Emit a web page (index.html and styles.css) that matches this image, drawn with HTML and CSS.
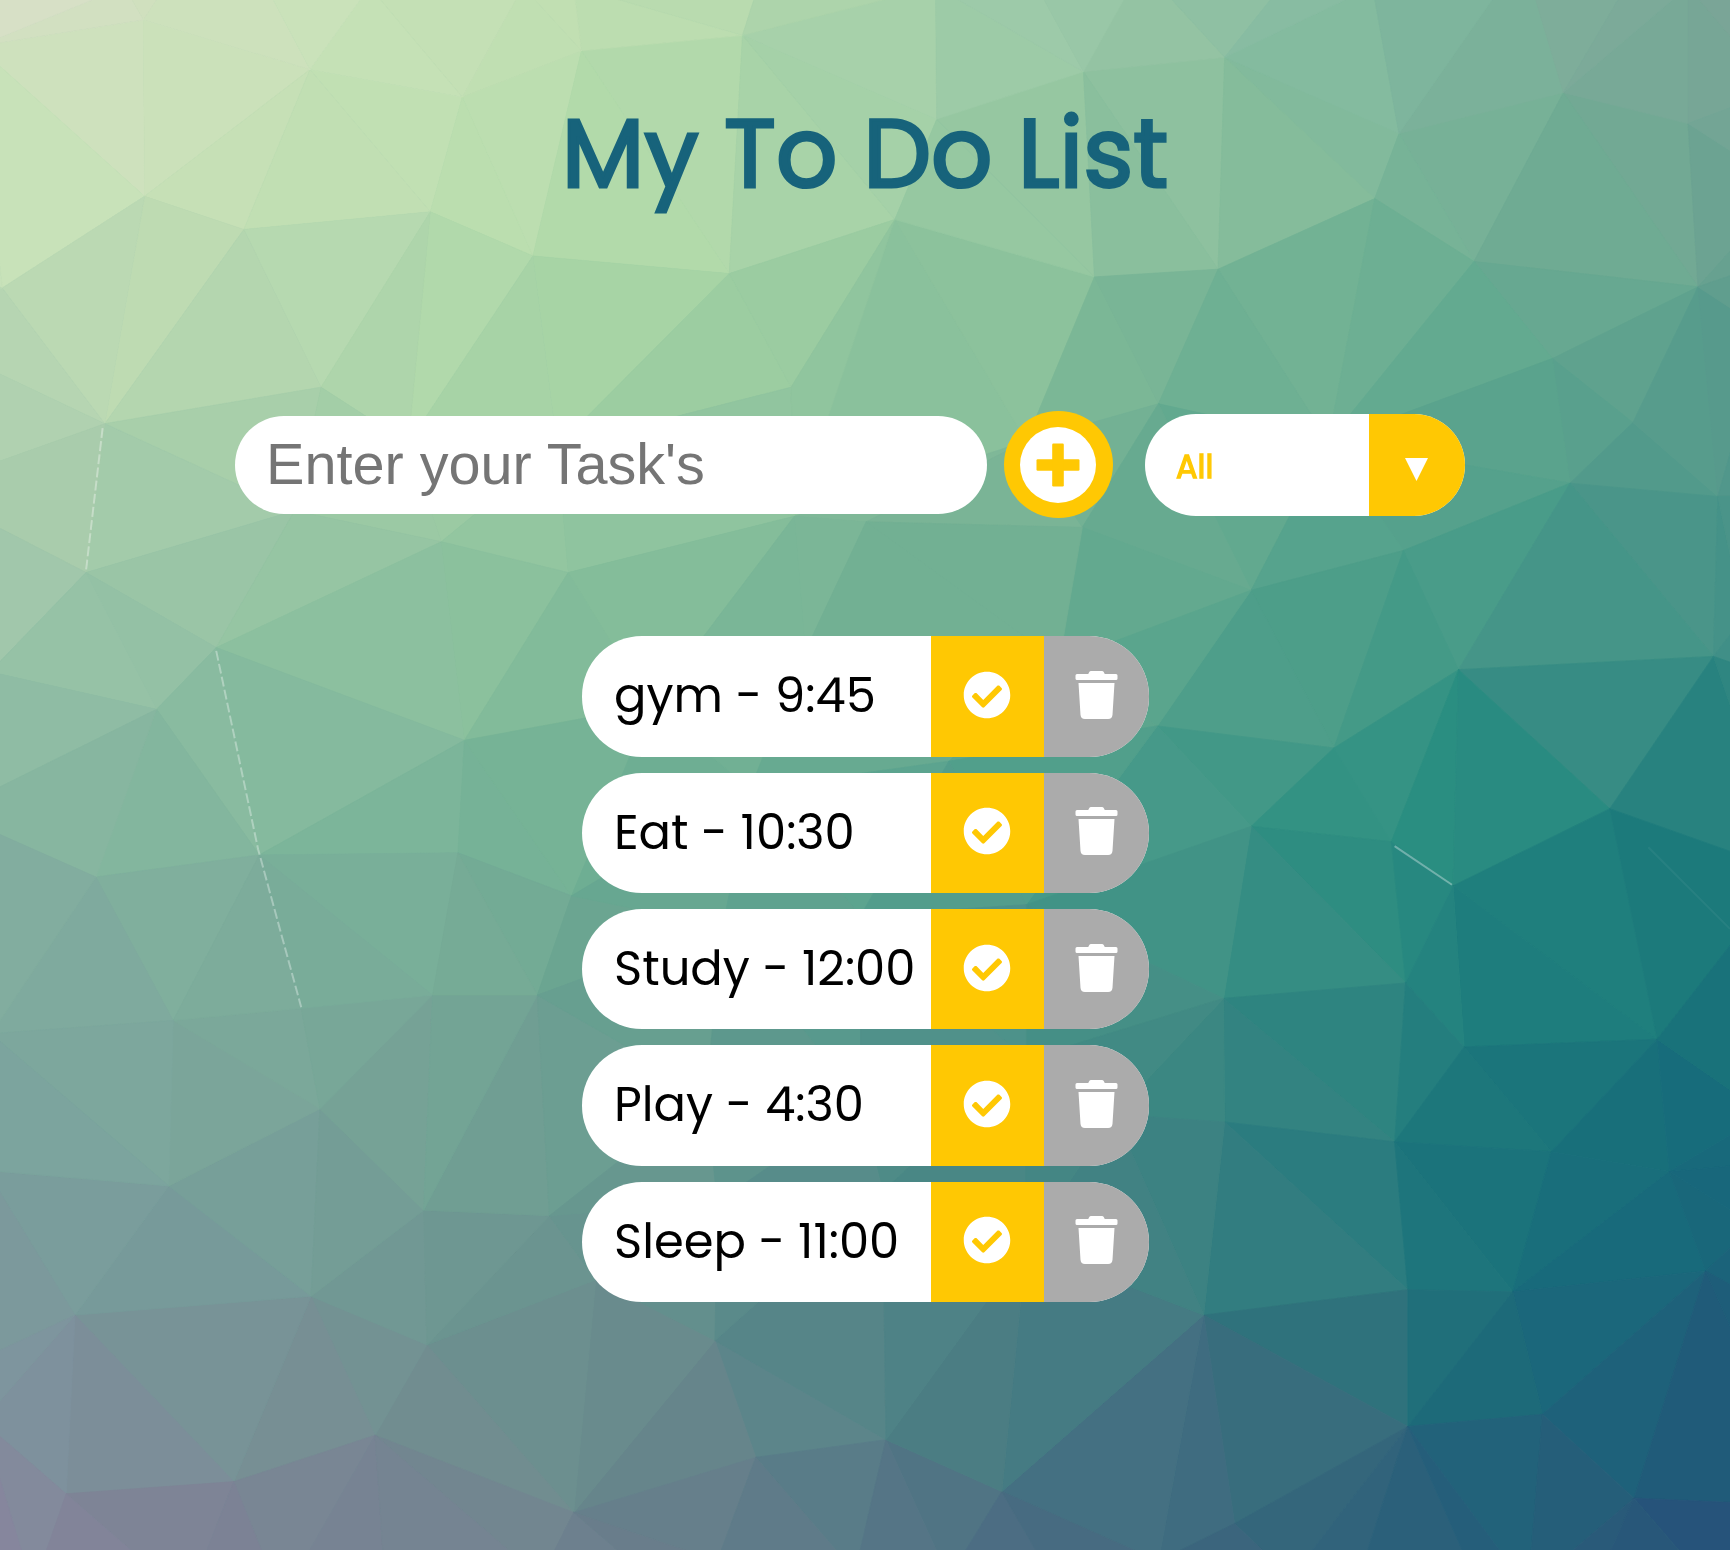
FILE: index.html
```html
<!DOCTYPE html>
<html lang="en">
<head>
<meta charset="utf-8">
<title>My To Do List</title>
<link rel="stylesheet" href="styles.css">
</head>
<body>
<svg class="backdrop" id="backdrop" viewBox="0 0 1568 1405" preserveAspectRatio="none" aria-hidden="true"></svg>
<svg class="sprite" aria-hidden="true">
  <symbol id="check" viewBox="0 0 512 512"><path d="M504 256c0 136.967-111.033 248-248 248S8 392.967 8 256 119.033 8 256 8s248 111.033 248 248zM227.314 387.314l184-184c6.248-6.248 6.248-16.379 0-22.627l-22.627-22.627c-6.248-6.249-16.379-6.249-22.628 0L216 308.118l-70.059-70.059c-6.248-6.248-16.379-6.248-22.628 0l-22.627 22.627c-6.248 6.248-6.248 16.379 0 22.627l104 104c6.249 6.249 16.379 6.249 22.628.001z"/></symbol>
  <symbol id="trash" viewBox="0 0 448 512"><path d="M432 32H312l-9.4-18.7A24 24 0 0 0 281.1 0H166.8a23.72 23.72 0 0 0-21.4 13.3L136 32H16A16 16 0 0 0 0 48v32a16 16 0 0 0 16 16h416a16 16 0 0 0 16-16V48a16 16 0 0 0-16-16zM53.2 467a48 48 0 0 0 47.9 45h245.8a48 48 0 0 0 47.9-45L416 128H32z"/></symbol>
</svg>
<header class="header"><h1 class="title">My To Do List</h1></header>
<main>
  <form class="bar">
    <input class="task-input" type="text" placeholder="Enter your Task's">
    <button class="add" type="button" aria-label="Add">
      <svg class="add-icon" viewBox="0 0 76 76"><circle cx="38" cy="38" r="38" fill="#fff"/><rect x="16.5" y="32.2" width="43" height="11.6" rx="1.2"/><rect x="32.2" y="16.5" width="11.6" height="43" rx="1.2"/></svg>
    </button>
    <div class="select">
      <span class="select-value">All</span>
      <span class="select-arrow"><svg class="caret" viewBox="0 0 23 23"><path d="M0 0H23L11.5 23Z"/></svg></span>
    </div>
  </form>
  <ul class="list">
    <li class="todo"><span class="todo-text">gym - 9:45</span><button class="done"><svg><use href="#check"/></svg></button><button class="del"><svg><use href="#trash"/></svg></button></li>
    <li class="todo"><span class="todo-text">Eat - 10:30</span><button class="done"><svg><use href="#check"/></svg></button><button class="del"><svg><use href="#trash"/></svg></button></li>
    <li class="todo"><span class="todo-text">Study - 12:00</span><button class="done"><svg><use href="#check"/></svg></button><button class="del"><svg><use href="#trash"/></svg></button></li>
    <li class="todo"><span class="todo-text">Play - 4:30</span><button class="done"><svg><use href="#check"/></svg></button><button class="del"><svg><use href="#trash"/></svg></button></li>
    <li class="todo"><span class="todo-text">Sleep - 11:00</span><button class="done"><svg><use href="#check"/></svg></button><button class="del"><svg><use href="#trash"/></svg></button></li>
  </ul>
</main>
<script src="backdrop.js"></script>
</body>
</html>
```
FILE: styles.css
```css
* { box-sizing: border-box; }
body {
  margin: 0;
  height: 1550px;
  overflow: hidden;
  background: #6fa796;
  font-family: Poppins, Inter, sans-serif;
}
.backdrop { position: fixed; inset: 0; width: 100%; height: 100%; z-index: -1; }
.sprite { display: none; }
.header { height: 411px; padding-top: 96.4px; text-align: center; }
.title {
  margin: 0;
  font-size: 96px;
  line-height: 116px;
  font-weight: 400;
  -webkit-text-stroke: 3px #17637b;
  color: #17637b;
  white-space: nowrap;
}
.bar { display: flex; align-items: center; height: 108px; padding-left: 234.5px; }
.task-input {
  width: 752.5px;
  height: 98px;
  margin: 0.4px 16.7px 0 0;
  padding: 0 31.5px 2.5px;
  border: 0;
  border-radius: 50px;
  background: #fff;
  font: 57.6px "Liberation Sans", Arial, sans-serif;
}
.add {
  display: grid;
  place-items: center;
  width: 109px;
  height: 107px;
  margin-top: -1px;
  padding: 0;
  border: 0;
  border-radius: 50%;
  background: #ffc803;
}
.add-icon { width: 76px; height: 76px; fill: #ffc803; }
.select {
  display: flex;
  width: 320.5px;
  height: 102px;
  margin: 0.6px 0 0 32.3px;
  border-radius: 51px;
  overflow: hidden;
  background: #fff;
}
.select-value { width: 224px; padding: 2px 0 0 31px; font-size: 32px; line-height: 102px; -webkit-text-stroke: 1.3px #ffc803; color: #ffc803; }
.select-arrow { flex: 1; display: grid; place-items: center; background: #ffc803; padding: 8px 1px 0 0; }
.caret { width: 23px; height: 23px; fill: #fff; }
.list {
  display: flex;
  flex-direction: column;
  gap: 16px;
  width: 567px;
  margin: 117.3px 0 0 582px;
  padding: 0;
  list-style: none;
}
.todo {
  display: grid;
  grid-template-columns: 349px 113px 105px;
  height: 120.4px;
  border-radius: 60px;
  overflow: hidden;
  background: #fff;
}
.todo-text { padding-left: 32px; font-size: 48px; line-height: 120.5px; white-space: nowrap; }
.done, .del { display: grid; place-items: center; border: 0; padding: 0 0 3.5px; }
.done { background: #ffc803; padding-right: 2px; }
.del { background: #ababab; padding-right: 1px; }
.done svg { width: 48px; height: 48px; fill: #fff; }
.del svg { width: 43px; height: 48px; fill: #fff; }
```
FILE: backdrop.js
```javascript
// Low-poly backdrop: triangulates the points and fills each facet from a colour field.
const points = [
  [130,18],[-20,42],[281,63],[419,88],[527,46],[673,32],[131,178],[221,208],[390,192],[483,232],[661,248],
  [2,261],[95,384],[291,351],[717,351],[370,402],[505,405],[267,463],[-70,306],[-70,443],[78,519],[196,587],
  [400,491],[515,519],[-9,609],[142,643],[87,795],[235,775],[421,671],[415,773],[518,812],[720,468],[785,473],
  [811,199],[930,400],[849,108],[982,65],[1110,52],[1268,121],[1417,84],[1530,112],[992,251],[1104,244],[1246,180],
  [1336,237],[1539,260],[1407,325],[1050,366],[1480,383],[1423,438],[1557,450],[1204,400],[981,478],[1134,535],[1272,499],
  [1322,607],[1553,595],[1049,658],[1209,678],[1261,763],[1459,733],[1134,749],[1317,803],[1502,942],[1327,949],[1109,905],
  [1274,891],[1264,1035],[1110,1017],[1406,1044],[1513,1062],[1276,1169],[1091,1192],[1371,1171],[1546,1152],[1276,1293],
  [1398,1282],[1119,1381],[908,1352],[1481,1358],[803,1305],[685,1321],[648,1215],[540,1160],[520,1371],[387,1219],
  [340,1301],[282,1175],[212,1343],[68,1192],[60,1354],[153,1075],[290,1005],[384,1097],[498,1102],[157,925],[273,914],
  [392,902],[487,902],[-8,937],[-46,736],[-12,1061],[-60,1252],[-16,1288],
  [113,-12],[335,-12],[474,-12],[520,-12],[687,-12],[848,-12],[930,-30],[1035,-30],[1175,-30],[1244,-12],[1380,-40],[1490,-40],[1530,-12],
  [1610,82],[1620,170],[1640,225],[1600,300],[1580,560],[1640,625],[1620,790],[1600,1010],[1600,1054],[1590,1110],[1640,1365],
  [30,1440],[170,1450],[255,1450],[350,1450],[490,1430],[600,1440],[650,1415],[775,1425],[860,1430],[950,1425],[1050,1415],[1170,1430],[1225,1450],[1345,1450],[1385,1440],[1440,1450],[1560,1450],
  [590,640],[730,590],[680,715],[860,690],[960,600],[655,840],[780,830],[930,820],[640,990],[780,1000],[930,960],[650,1090],[800,1080],[930,1130],[1010,1010],
  [-90,-90],[200,-90],[450,-90],[700,-90],[950,-90],[1200,-90],[1450,-90],[1660,-90],[1720,200],[1720,450],[1720,700],[1720,950],[1720,1250],[1720,1550],
  [1400,1550],[1100,1550],[800,1550],[500,1550],[250,1550],[-150,1550],[-150,1250],[-150,1000],[-150,750],[-150,500],[-150,200]
];
// Ridges that must stay in the mesh, as pairs of points.
const ridges = [
  [1104,244,1204,400],[1246,180,1204,400],[1336,237,1204,400],[1104,244,1050,366],[992,251,1050,366],[992,251,930,400],
  [1407,325,1204,400],[1336,237,1407,325],[1336,237,1539,260],[1407,325,1539,260],[1539,260,1480,383],[1407,325,1480,383],[1407,325,1423,438],[1539,260,1557,450],
  [1204,400,1423,438],[1204,400,1272,499],[1204,400,1134,535],[1050,366,1134,535],[1050,366,981,478],
  [811,199,930,400],[811,199,717,351],[811,199,720,468],[661,248,717,351],[661,248,505,405],[483,232,505,405],[483,232,370,402],[390,192,370,402],
  [390,192,291,351],[221,208,95,384],[131,178,281,63],[281,63,221,208],[419,88,390,192],[527,46,483,232],[419,88,483,232],[673,32,661,248],
  [849,108,992,251],[982,65,992,251],[1110,52,1104,244],[1110,52,1246,180],[1417,84,1336,237],[1417,84,1539,260],
  [505,405,515,519],[78,519,267,463],[196,587,267,463],[196,587,400,491],[400,491,421,671],[515,519,421,671],[196,587,235,775],
  [1423,438,1322,607],[1423,438,1553,595],[1322,607,1317,803],[1322,607,1261,763],[1322,607,1209,678],[1272,499,1209,678],[1134,535,1209,678],[1134,535,1049,658],
  [1553,595,1459,733],[1209,678,1134,749],[1049,658,1134,749],[1134,749,1109,905],[1134,749,1274,891],[1261,763,1274,891],[1317,803,1274,891],
  [1317,803,1502,942],[1459,733,1502,942],[1274,891,1264,1035],[1109,905,1264,1035],[1110,1017,1276,1169],[1110,1017,1091,1192],
  [1264,1035,1371,1171],[1371,1171,1513,1062],[1371,1171,1276,1293],[1546,1152,1398,1282],[1546,1152,1481,1358],[1091,1192,1276,1293],[1091,1192,1119,1381],[1091,1192,908,1352],
  [648,1215,520,1371],[387,1219,520,1371],[540,1160,520,1371],[282,1175,387,1219],[68,1192,212,1343],[282,1175,212,1343],[153,1075,282,1175],[290,1005,282,1175],
  [290,1005,157,925],[290,1005,273,914],[290,1005,392,902],[487,902,384,1097],[87,795,157,925],[235,775,157,925],[235,775,273,914]
];
const xs = [0,150,300,450,600,750,900,1050,1200,1330,1450,1568];
const ys = [0,150,300,450,600,750,870,1010,1150,1270,1405];
const field = [
  "d7e0c6 d0e0be c9e2b9 c4e0b4 bcddb0 acd3ab 9fcbaa 95c3a4 86bba2 7db49d 7eac9a 7aa597",
  "c9e3ba cae1b8 c1dfb3 bcdfb0 b1d9a9 a6d2a8 98c9a2 8ec19e 82bb9a 77b197 73ac94 71a594",
  "b7d6b3 b9d8b0 b1d6ae aed8a8 a3d2a3 95c99f 8cc29c 77b495 6eb092 65ab91 64a690 5a9c8c",
  "aaccad a4cbaa 9dcaa5 97c8a1 90c49f 82bb9a 7ab496 68ab90 59a58e 539f8b 4f9a8b 4d958a",
  "98c2a8 91c0a4 8cbf9f 86be9b 7eb998 6fae93 6aac90 5aa58d 4b9c88 3d9886 3f9187 3f8f87",
  "86b3a0 82b59e 7eb59c 76b297 6aab92 5da48f 519f8b 449889 2f9082 228b80 237f7c 1d7b7b",
  "7fa89f 80ad9d 79ab99 75aa95 66a08f 579a8d 4c918a 419085 338b82 21827e 1c7c7c 1a767a",
  "7da49f 7ca69c 78a397 71a094 689b90 578f8a 478885 3d8682 2e7f80 1d777b 18707a 176a7b",
  "7b9a9c 789a9a 739a97 6c9690 64908e 558588 4a8285 3f8083 2d7a7f 1a727b 186a7b 1a647a",
  "7f939f 7a9097 768f93 6e8f8f 68888c 588589 497b82 437383 346d7b 1e6a79 1f627a 1e5c79",
  "86869d 7f8296 788293 738391 687d8b 5b7788 4d6d83 41677f 33637b 265d7a 295a79 27517a"
].map(r => r.split(" ").map(h => [0, 2, 4].map(i => parseInt(h.substr(i, 2), 16))));

function locate(axis, v) {
  v = Math.max(axis[0], Math.min(axis[axis.length - 1], v));
  let i = 0;
  while (i < axis.length - 2 && v > axis[i + 1]) i++;
  return [i, (v - axis[i]) / (axis[i + 1] - axis[i])];
}
function colourAt(x, y) {
  const [i, u] = locate(xs, x), [j, v] = locate(ys, y);
  const c = [0, 1, 2].map(k => Math.round(
    (field[j][i][k] * (1 - u) + field[j][i + 1][k] * u) * (1 - v) +
    (field[j + 1][i][k] * (1 - u) + field[j + 1][i + 1][k] * u) * v));
  return `rgb(${c})`;
}
function circum(p, a, b, c) {
  const [ax, ay] = p[a], [bx, by] = p[b], [cx, cy] = p[c];
  const d = 2 * (ax * (by - cy) + bx * (cy - ay) + cx * (ay - by));
  const A = ax * ax + ay * ay, B = bx * bx + by * by, C = cx * cx + cy * cy;
  const x = (A * (by - cy) + B * (cy - ay) + C * (ay - by)) / d;
  const y = (A * (cx - bx) + B * (ax - cx) + C * (bx - ax)) / d;
  return { v: [a, b, c], x, y, r: (ax - x) ** 2 + (ay - y) ** 2 };
}
function triangulate(src) {
  const n = src.length;
  const p = src.map(([x, y], i) => [x + (i % 7) * 0.013, y + (i % 5) * 0.017]).concat([[-20000, -15000], [20000, -15100], [300, 30000]]);
  let tris = [circum(p, n, n + 1, n + 2)];
  for (let i = 0; i < n; i++) {
    const edges = new Map();
    tris = tris.filter(t => {
      if ((p[i][0] - t.x) ** 2 + (p[i][1] - t.y) ** 2 >= t.r) return true;
      for (const [a, b] of [[0, 1], [1, 2], [2, 0]]) {
        const e = [t.v[a], t.v[b]].sort((m, k) => m - k), key = e.join();
        edges.has(key) ? edges.delete(key) : edges.set(key, e);
      }
      return false;
    });
    for (const [a, b] of edges.values()) tris.push(circum(p, a, b, i));
  }
  return tris.filter(t => t.v.every(k => k < n)).map(t => t.v);
}
const side = (a, b, c) => Math.sign((b[0] - a[0]) * (c[1] - a[1]) - (b[1] - a[1]) * (c[0] - a[0]));
const cross = (a, b, c, d) => {
  [a, b, c, d] = [a, b, c, d].map(k => points[k]);
  return side(a, b, c) * side(a, b, d) < 0 && side(c, d, a) * side(c, d, b) < 0;
};
// Flips the diagonals that cut through a ridge until the ridge is an edge.
function keepRidge(tris, a, b) {
  for (let round = 0; round < 12; round++) {
    if (tris.some(t => t.includes(a) && t.includes(b))) return;
    let flipped = false;
    for (let i = 0; i < tris.length && !flipped; i++) {
      for (let j = i + 1; j < tris.length && !flipped; j++) {
        const shared = tris[i].filter(k => tris[j].includes(k));
        if (shared.length !== 2 || !cross(a, b, shared[0], shared[1])) continue;
        const u = tris[i].find(k => !shared.includes(k)), w = tris[j].find(k => !shared.includes(k));
        const direct = [u, w].filter(k => k === a || k === b).length;
        if (!direct || !cross(u, w, shared[0], shared[1])) continue;
        if (direct === 1 && cross(a, b, u, w)) continue;
        tris[i] = [u, w, shared[0]];
        tris[j] = [u, w, shared[1]];
        flipped = true;
      }
    }
    if (!flipped) return;
  }
}
const mesh = triangulate(points);
const indexOf = (x, y) => points.findIndex(p => p[0] === x && p[1] === y);
for (const [x1, y1, x2, y2] of ridges) keepRidge(mesh, indexOf(x1, y1), indexOf(x2, y2));

let out = "";
for (const t of mesh) {
  const q = t.map(k => points[k]);
  const cx = (q[0][0] + q[1][0] + q[2][0]) / 3;
  const cy = (q[0][1] + q[1][1] + q[2][1]) / 3;
  const c = colourAt(cx, cy);
  out += `<polygon points="${q.join(" ")}" fill="${c}" stroke="${c}" stroke-width="0.7"/>`;
}
out += '<g fill="none" stroke="#fff" stroke-opacity="0.34" stroke-width="1.8" stroke-dasharray="9 3">' +
  '<path d="M93 388L78 517M196 590L234 770L273 913"/><path d="M1264 767L1316 802" stroke-dasharray="none"/>' +
  '<path d="M1494 768L1568 842" stroke-opacity="0.05" stroke-dasharray="none"/></g>';
document.getElementById("backdrop").innerHTML = out;
```
